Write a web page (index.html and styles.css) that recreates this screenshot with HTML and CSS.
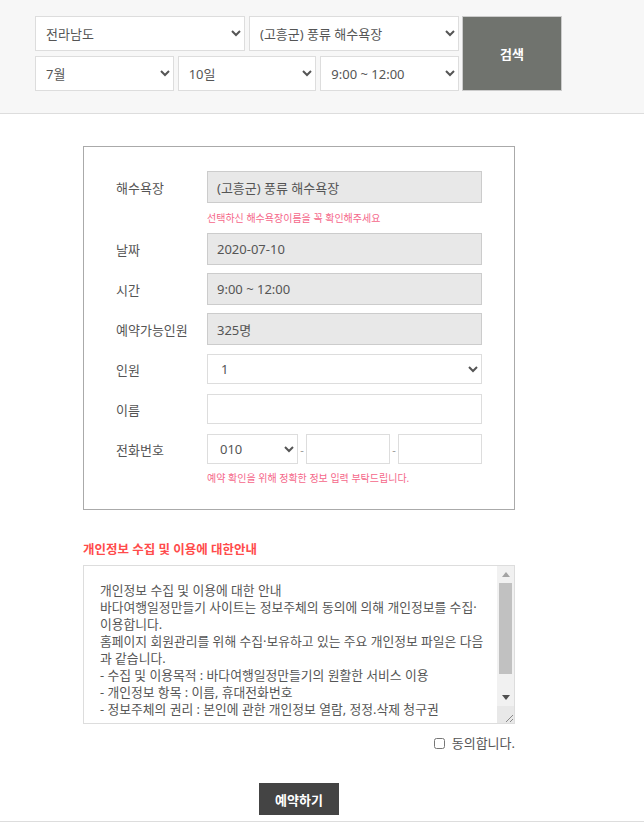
FILE: index.html
```html
<!DOCTYPE html>
<html lang="ko">
<head>
    <meta charset="UTF-8">
    <meta name="viewport" content="width=device-width, initial-scale=1.0">
    <title>해수욕장 예약</title>
    <link rel="stylesheet" href="styles.css">
</head>
<body>

<div class="search-bar">
    <form class="search" onsubmit="return false">
        <div class="search-fields">
            <div class="search-row">
                <select name="sido">
                    <option>전라남도</option>
                </select>
                <select name="beach">
                    <option>(고흥군) 풍류 해수욕장</option>
                </select>
            </div>
            <div class="search-row">
                <select name="month">
                    <option>7월</option>
                </select>
                <select name="day">
                    <option>10일</option>
                </select>
                <select name="time">
                    <option>9:00 ~ 12:00</option>
                </select>
            </div>
        </div>
        <button type="submit" class="btn-search">검색</button>
    </form>
</div>

<div class="content">
    <form class="reserve-box" onsubmit="return false">
        <div class="field-row">
            <label class="field-label">해수욕장</label>
            <input type="text" class="field-input readonly" value="(고흥군) 풍류 해수욕장" readonly>
        </div>
        <p class="field-note">선택하신 해수욕장이름을 꼭 확인해주세요</p>
        <div class="field-row">
            <label class="field-label">날짜</label>
            <input type="text" class="field-input readonly" value="2020-07-10" readonly>
        </div>
        <div class="field-row">
            <label class="field-label">시간</label>
            <input type="text" class="field-input readonly" value="9:00 ~ 12:00" readonly>
        </div>
        <div class="field-row">
            <label class="field-label">예약가능인원</label>
            <input type="text" class="field-input readonly" value="325명" readonly>
        </div>
        <div class="field-row">
            <label class="field-label">인원</label>
            <select class="field-input edit">
                <option>1</option>
                <option>2</option>
                <option>3</option>
            </select>
        </div>
        <div class="field-row">
            <label class="field-label">이름</label>
            <input type="text" class="field-input edit">
        </div>
        <div class="field-row last">
            <label class="field-label">전화번호</label>
            <div class="phone">
                <select class="phone-first">
                    <option>010</option>
                    <option>011</option>
                </select>
                <span class="dash">-</span>
                <input type="text" class="phone-part">
                <span class="dash">-</span>
                <input type="text" class="phone-part">
            </div>
        </div>
        <p class="field-note bottom">예약 확인을 위해 정확한 정보 입력 부탁드립니다.</p>
    </form>

    <h4 class="agree-title">개인정보 수집 및 이용에 대한안내</h4>
    <div class="agree-box">
        <textarea class="agree-text" readonly>개인정보 수집 및 이용에 대한 안내
바다여행일정만들기 사이트는 정보주체의 동의에 의해 개인정보를 수집·
이용합니다.
홈페이지 회원관리를 위해 수집·보유하고 있는 주요 개인정보 파일은 다음
과 같습니다.
- 수집 및 이용목적 : 바다여행일정만들기의 원활한 서비스 이용
- 개인정보 항목 : 이름, 휴대전화번호
- 정보주체의 권리 : 본인에 관한 개인정보 열람, 정정.삭제 청구권</textarea>
        <div class="scrollbar">
            <div class="sb-btn">
                <svg width="8" height="5" viewBox="0 0 8 5"><polygon points="0,5 4,0 8,5" fill="#a3a3a3"/></svg>
            </div>
            <div class="sb-thumb"></div>
            <div class="sb-space"></div>
            <div class="sb-btn">
                <svg width="8" height="5" viewBox="0 0 8 5"><polygon points="0,0 8,0 4,5" fill="#505050"/></svg>
            </div>
            <div class="sb-corner">
                <svg width="10" height="10" viewBox="0 0 10 10"><path d="M9 2 L2 9 M9 6 L6 9" stroke="#888" stroke-width="1" fill="none"/></svg>
            </div>
        </div>
    </div>
    <div class="agree-check">
        <label><input type="checkbox"> 동의합니다.</label>
    </div>

    <div class="submit-wrap">
        <button type="submit" class="btn-reserve">예약하기</button>
    </div>
</div>

<div class="footer"></div>

</body>
</html>
```

FILE: styles.css
```css
body { font-family: "Noto Sans", "Noto Sans CJK KR", sans-serif; margin: 0; color: #555; background-color: #fff; }
select, input, button, textarea { font-family: inherit; }

.search-bar { background-color: #f7f7f7; border-bottom: 1px solid #ddd; }
.search { display: flex; gap: 3px; padding: 16px 0 22px 35px; margin: 0; }
.search-fields { width: 424px; display: flex; flex-direction: column; gap: 5px; }
.search-row { display: flex; gap: 4px; }
.search-row select { flex: 1; min-width: 0; height: 35px; padding: 0 6px; border: 1px solid #ddd; background-color: #fff; color: #555; font-size: 13px; }
.btn-search { width: 100px; height: 75px; border: 1px solid #ccc; background-color: #70736e; color: #fff; font-size: 13px; font-weight: bold; cursor: pointer; }

.content { width: 432px; margin: 32px 0 0 83px; }
.reserve-box { display: block; box-sizing: border-box; border: 1px solid #aaa; padding: 24px 32px 24px 32px; }
.field-row { display: flex; align-items: center; height: 32px; margin-bottom: 8px; }
.field-row.last { margin-bottom: 0; }
.field-label { width: 91px; font-size: 13px; color: #555; }
.field-input { box-sizing: border-box; width: 275px; font-size: 13px; color: #555; padding: 0 9px; }
.field-input.readonly { height: 32px; background-color: #e8e8e8; border: 1px solid #ccc; }
.field-input.edit { height: 30px; background-color: #fff; border: 1px solid #ddd; }
.field-note { margin: 0 0 8px 91px; font-size: 10px; line-height: 14px; color: #f5678a; }
.field-note.bottom { margin: 6px 0 0 91px; }

.phone { display: flex; align-items: center; width: 275px; }
.phone-first { box-sizing: border-box; width: 91px; height: 30px; border: 1px solid #ddd; background-color: #fff; color: #555; font-size: 13px; padding: 0 8px; }
.dash { width: 8px; text-align: center; font-size: 11px; color: #999; }
.phone-part { box-sizing: border-box; width: 84px; height: 30px; border: 1px solid #ddd; padding: 0 6px; }

.agree-title { margin: 32px 0 7px; font-size: 12.5px; line-height: 16px; font-weight: bold; color: #ff4b4b; }
.agree-box { display: flex; box-sizing: border-box; width: 432px; height: 159px; border: 1px solid #ddd; }
.agree-text { flex: 1; min-width: 0; margin: 0; padding: 16px 4px 0 16px; border: none; outline: none; font-size: 12.8px; line-height: 17px; color: #555; overflow: hidden; resize: none; }
.scrollbar { width: 17px; display: flex; flex-direction: column; background-color: #f1f1f1; }
.sb-btn { height: 17px; display: flex; align-items: center; justify-content: center; }
.sb-thumb { height: 91px; margin: 0 2px; background-color: #c1c1c1; }
.sb-space { flex: 1; }
.sb-corner { height: 17px; display: flex; align-items: flex-end; justify-content: flex-end; background-color: #e8e8e8; }
.agree-check { margin-top: 11px; text-align: right; font-size: 13px; line-height: 16px; color: #555; }
.agree-check input { width: 11px; height: 11px; margin: 0 3px 0 0; vertical-align: -1px; }

.submit-wrap { margin-top: 32px; text-align: center; }
.btn-reserve { width: 80px; height: 32px; border: none; background-color: #444; color: #fff; font-size: 13px; font-weight: bold; cursor: pointer; }

.footer { margin-top: 6px; border-top: 1px solid #ddd; height: 40px; }
```
